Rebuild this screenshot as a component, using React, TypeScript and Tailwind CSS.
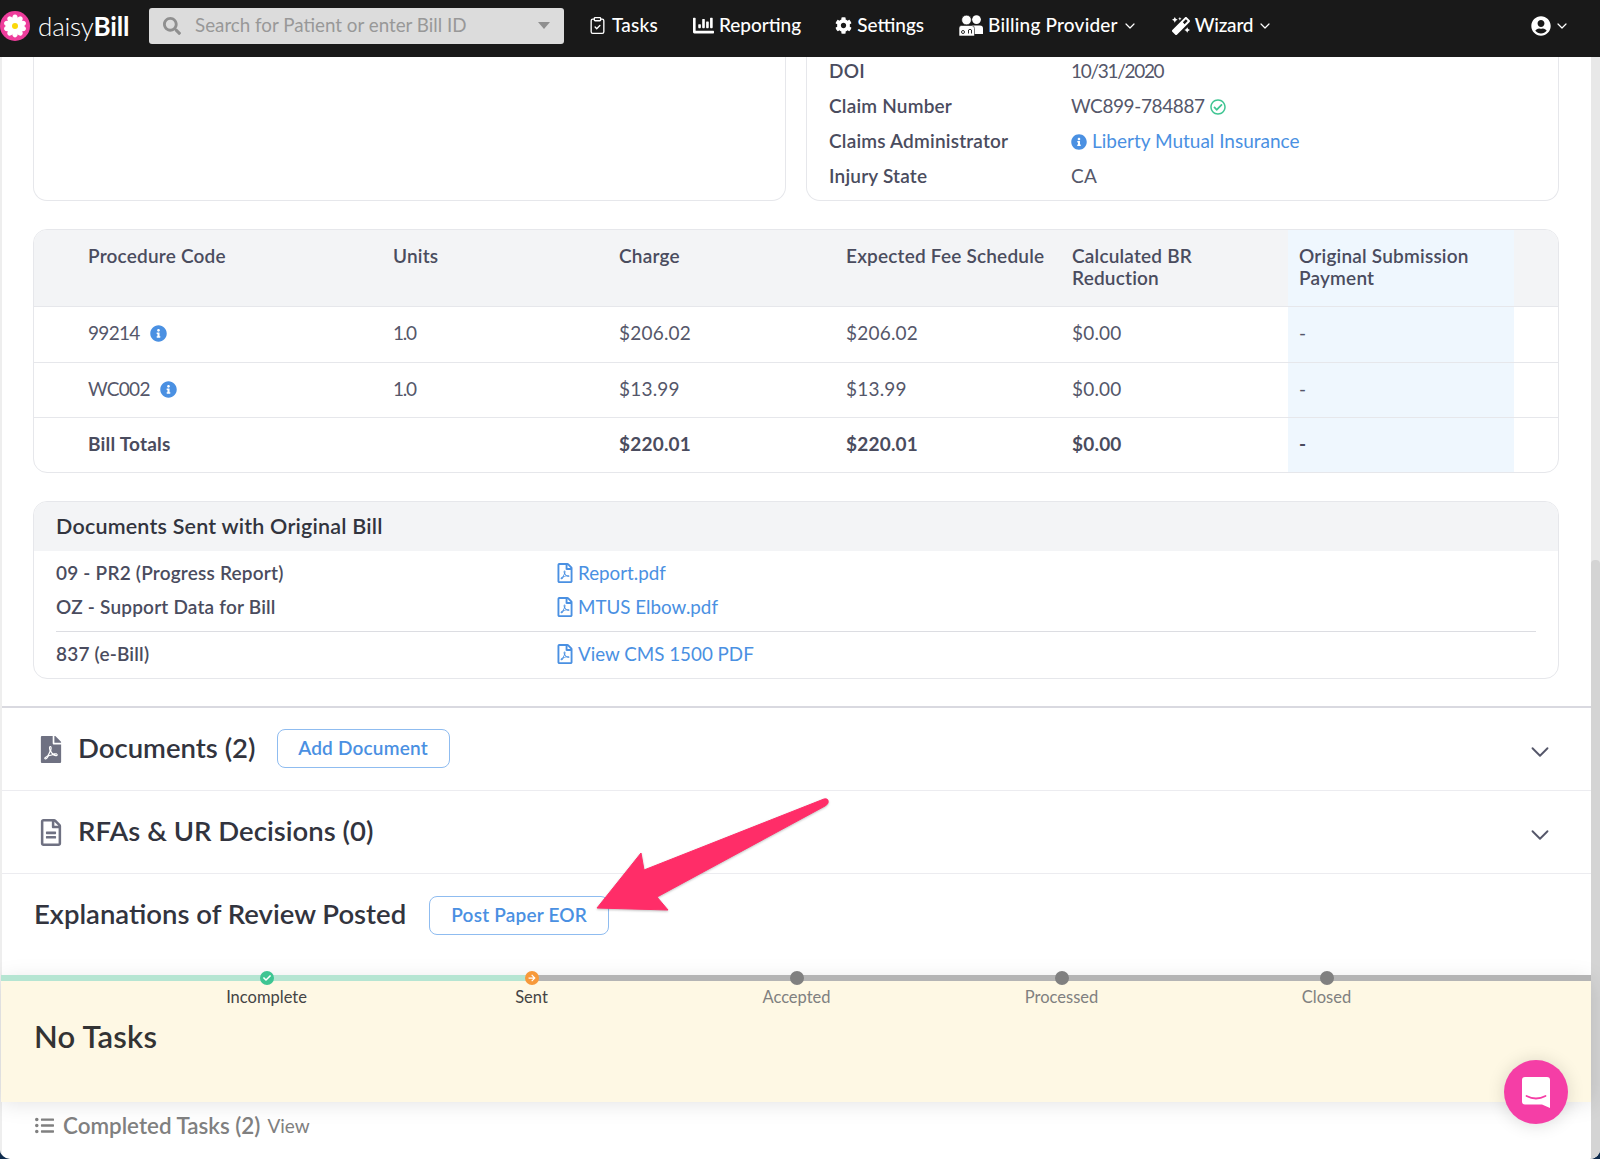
import { ChevronDown, ClipboardCheck } from 'lucide-react';
import {
  FaArrowRight,
  FaChartBar,
  FaCheck,
  FaCog,
  FaFilePdf,
  FaInfoCircle,
  FaListUl,
  FaMagic,
  FaRegCheckCircle,
  FaRegFileAlt,
  FaRegFilePdf,
  FaSearch,
  FaUserCircle,
} from 'react-icons/fa';

const font = { fontFamily: '"Lato", "Noto Sans", sans-serif' };

const tableRows = [
  { code: '99214', height: 'h-[56px]', units: '1.0', charge: '$206.02', fee: '$206.02', br: '$0.00' },
  { code: 'WC002', height: 'h-[55px]', units: '1.0', charge: '$13.99', fee: '$13.99', br: '$0.00' },
];

const steps = [
  { label: 'Incomplete', state: 'done' },
  { label: 'Sent', state: 'current' },
  { label: 'Accepted', state: 'todo' },
  { label: 'Processed', state: 'todo' },
  { label: 'Closed', state: 'todo' },
];

const gridCols = 'grid grid-cols-[348px_226px_227px_226px_227px_226px_1fr]';

function Logo() {
  const petals = [0, 36, 72, 108, 144, 180, 216, 252, 288, 324];
  return (
    <svg width="30" height="30" viewBox="0 0 30 30" className="shrink-0">
      <circle cx="15" cy="15" r="15" fill="#ee3d9c" />
      {petals.map((a) => (
        <ellipse key={a} cx="15" cy="8.4" rx="2.9" ry="4.8" fill="#fff" transform={`rotate(${a} 15 15)`} />
      ))}
      <circle cx="15" cy="15" r="3" fill="#fbd80a" />
    </svg>
  );
}

// two busts, the front one with a stethoscope
function ProviderIcon() {
  return (
    <svg width="24" height="21" viewBox="0 0 24 21" className="shrink-0">
      <circle cx="17.5" cy="4.6" r="4.4" fill="#fff" />
      <path d="M13 10.5 H21 Q24 10.5 24 13.5 V19 H13 Z" fill="#fff" />
      <circle cx="7.5" cy="5" r="4.8" fill="#fff" stroke="#191919" strokeWidth="0.6" />
      <path d="M2.5 10.5 H12.5 Q15.5 10.5 15.5 13.5 V21 H0 V13 Q0 10.5 2.5 10.5 Z" fill="#fff" stroke="#191919" strokeWidth="0.6" />
      <circle cx="4" cy="17" r="1.5" fill="none" stroke="#191919" strokeWidth="0.9" />
      <path d="M9.5 18.5 V15 Q11 13.5 12.5 15 V18.5" fill="none" stroke="#191919" strokeWidth="0.9" />
    </svg>
  );
}

function Header() {
  return (
    <header className="relative z-10 flex h-[57px] shrink-0 items-center bg-[#191919] pb-[6px] text-[19px] font-medium tracking-normal text-white">
      <Logo />
      <div className="ml-[8px] w-[111px] text-[26px] leading-none tracking-[-0.2px]">
        <span className="font-light">daisy</span>
        <span className="font-bold">Bill</span>
      </div>
      <div className="flex h-[36px] w-[415px] items-center rounded-[3px] bg-[#dcdcdc] pl-[14px] pr-[14px] text-[#989898]">
        <FaSearch className="h-[18px] w-[18px] text-[#8f8f8f]" />
        <span className="ml-[14px] flex-1 text-[18.8px] font-normal">Search for Patient or enter Bill ID</span>
        <span className="h-0 w-0 border-x-[6px] border-t-[7px] border-x-transparent border-t-[#8f8f8f]" />
      </div>
      <div className="ml-[24px] flex items-center">
        <ClipboardCheck className="h-[19px] w-[19px]" strokeWidth={1.7} />
        <span className="ml-[5px] tracking-[0.2px]">Tasks</span>
      </div>
      <div className="ml-[35px] flex items-center">
        <FaChartBar className="h-[21px] w-[21px]" />
        <span className="ml-[5px]">Reporting</span>
      </div>
      <div className="ml-[34px] flex items-center">
        <FaCog className="h-[17px] w-[17px]" />
        <span className="ml-[5px]">Settings</span>
      </div>
      <div className="ml-[35px] flex items-center">
        <ProviderIcon />
        <span className="ml-[5px] tracking-[0.2px]">Billing Provider</span>
        <ChevronDown className="ml-[4px] h-[16px] w-[16px]" strokeWidth={1.8} />
      </div>
      <div className="ml-[34px] flex items-center">
        <FaMagic className="h-[18px] w-[18px]" />
        <span className="ml-[5px] tracking-[-0.2px]">Wizard</span>
        <ChevronDown className="ml-[4px] h-[16px] w-[16px]" strokeWidth={1.8} />
      </div>
      <div className="ml-auto mr-[30px] flex items-center">
        <FaUserCircle className="h-[20px] w-[20px]" />
        <ChevronDown className="ml-[3px] h-[16px] w-[16px]" strokeWidth={1.8} />
      </div>
    </header>
  );
}

function ClaimCards() {
  const rows = [
    { label: 'DOI', value: <span className="tracking-[-1.3px]">10/31/2020</span> },
    {
      label: 'Claim Number',
      value: (
        <span className="flex items-center gap-[5px] tracking-[-0.4px]">
          WC899-784887 <FaRegCheckCircle className="h-[16px] w-[16px] text-[#3ec592]" />
        </span>
      ),
    },
    {
      label: 'Claims Administrator',
      value: (
        <span className="flex items-center gap-[5px] tracking-normal text-[#4a90e2]">
          <FaInfoCircle className="h-[16px] w-[16px]" /> Liberty Mutual Insurance
        </span>
      ),
    },
    { label: 'Injury State', value: <span>CA</span> },
  ];
  return (
    <div className="flex h-[144px] gap-[20px]">
      <div className="w-[753px] rounded-b-[14px] border border-t-0 border-[#e6e7eb]" />
      <div className="flex-1 rounded-b-[14px] border border-t-0 border-[#e6e7eb] pl-[22px]">
        <div className="-mt-[3px]">
          {rows.map((r) => (
            <div key={r.label} className="flex h-[35px] items-center text-[#55576a]">
              <span className="w-[242px] font-semibold text-[#4a4c5e]">{r.label}</span>
              {r.value}
            </div>
          ))}
        </div>
      </div>
    </div>
  );
}

function BillTable() {
  return (
    <div className="mt-[28px] overflow-hidden rounded-[14px] border border-[#e6e7eb]">
      <div className={`${gridCols} h-[76px] bg-[#f3f4f6] font-semibold leading-[22px] text-[#4a4c5e]`}>
        <div className="pl-[54px] pt-[15px]">Procedure Code</div>
        <div className="pl-[11px] pt-[15px]">Units</div>
        <div className="pl-[11px] pt-[15px]">Charge</div>
        <div className="pl-[11px] pt-[15px]">Expected Fee Schedule</div>
        <div className="pl-[11px] pt-[15px]">
          Calculated BR
          <br />
          Reduction
        </div>
        <div className="bg-[#eff7fe] pl-[11px] pt-[15px]">
          Original Submission
          <br />
          Payment
        </div>
        <div />
      </div>
      {tableRows.map((row) => (
        <div key={row.code} className={`${gridCols} ${row.height} border-t border-[#e6e7eb] text-[#55576a]`}>
          <div className="flex items-center gap-[10px] pb-[2px] pl-[54px] tracking-[-0.7px]">
            {row.code}
            <FaInfoCircle className="h-[17px] w-[17px] text-[#4a90e2]" />
          </div>
          <div className="flex items-center pb-[2px] pl-[11px] tracking-[-1.2px]">{row.units}</div>
          <div className="flex items-center pb-[2px] pl-[11px]">{row.charge}</div>
          <div className="flex items-center pb-[2px] pl-[11px]">{row.fee}</div>
          <div className="flex items-center pb-[2px] pl-[11px]">{row.br}</div>
          <div className="flex items-center bg-[#eff7fe] pb-[2px] pl-[11px]">-</div>
          <div />
        </div>
      ))}
      <div className={`${gridCols} h-[55px] border-t border-[#e6e7eb] font-bold text-[#4a4c5e]`}>
        <div className="flex items-center pb-[2px] pl-[54px]">Bill Totals</div>
        <div />
        <div className="flex items-center pb-[2px] pl-[11px]">$220.01</div>
        <div className="flex items-center pb-[2px] pl-[11px]">$220.01</div>
        <div className="flex items-center pb-[2px] pl-[11px]">$0.00</div>
        <div className="flex items-center bg-[#eff7fe] pb-[2px] pl-[11px]">-</div>
        <div />
      </div>
    </div>
  );
}

function DocLink({ label, file }: { label: string; file: string }) {
  return (
    <div className="flex h-[34px] items-center">
      <span className="w-[500px] font-semibold text-[#4a4c5e]">{label}</span>
      <FaRegFilePdf className="h-[20px] w-[18px] text-[#4a90e2]" />
      <span className="ml-[4px] text-[18.8px] tracking-normal text-[#4a90e2]">{file}</span>
    </div>
  );
}

function SentDocuments() {
  return (
    <div className="mt-[28px] overflow-hidden rounded-[14px] border border-[#e6e7eb]">
      <div className="flex h-[49px] items-center bg-[#f3f4f6] pl-[22px] text-[21.5px] font-semibold text-[#32343e]">
        Documents Sent with Original Bill
      </div>
      <div className="pl-[22px] pr-[22px] pt-[5px]">
        <DocLink label="09 - PR2 (Progress Report)" file="Report.pdf" />
        <DocLink label="OZ - Support Data for Bill" file="MTUS Elbow.pdf" />
        <div className="mt-[7px] border-t border-[#dcdde2] pb-[7px] pt-[5px]">
          <DocLink label="837 (e-Bill)" file="View CMS 1500 PDF" />
        </div>
      </div>
    </div>
  );
}

function OutlineButton({ children, className }: { children: string; className: string }) {
  return (
    <button className={`flex h-[39px] items-center justify-center rounded-[8px] border border-[#8fbcf0] text-[19px] font-semibold text-[#4a90e2] ${className}`}>
      {children}
    </button>
  );
}

function Collapsible({ icon, title, children }: { icon: React.ReactNode; title: string; children?: React.ReactNode }) {
  return (
    <div className="flex h-[83px] items-center border-b border-[#ececf0] pl-[38px] pr-[36px]">
      {icon}
      <h2 className="-mt-[2px] ml-[16px] text-[27.5px] font-semibold tracking-normal text-[#32343e]">{title}</h2>
      {children}
      <ChevronDown className="ml-auto mt-[6px] h-[30px] w-[30px] text-[#55576a]" strokeWidth={1.5} />
    </div>
  );
}

function Stepper() {
  return (
    <div className="relative z-[1] -ml-[1px] mt-[3px] flow-root bg-[#fef8e4] shadow-[0_0_22px_rgba(0,0,0,0.13)]">
      <div className="relative -mt-[10px] flex pl-[133px]">
        <div className="absolute left-0 right-0 top-[4px] h-[6px] bg-[#b4b4b4]" />
        <div className="absolute left-0 top-[4px] h-[6px] w-[532px] bg-[#b5e5d2]" />
        {steps.map((s) => (
          <div key={s.label} className="relative flex w-[265px] flex-col items-center">
            {s.state === 'done' && (
              <span className="flex h-[14px] w-[14px] items-center justify-center rounded-full bg-[#3ec592] text-white">
                <FaCheck className="h-[8px] w-[8px]" />
              </span>
            )}
            {s.state === 'current' && (
              <span className="flex h-[14px] w-[14px] items-center justify-center rounded-full bg-[#f7993a] text-white">
                <FaArrowRight className="h-[8px] w-[8px]" />
              </span>
            )}
            {s.state === 'todo' && <span className="h-[14px] w-[14px] rounded-full bg-[#808080]" />}
            <span className={`mt-[2px] text-[16.5px] leading-[20px] tracking-normal ${s.state === 'todo' ? 'text-[#808080]' : 'text-[#444]'}`}>
              {s.label}
            </span>
          </div>
        ))}
      </div>
      <div className="flex h-[95px] items-start pl-[33px] pt-[6px] text-[31px] font-semibold text-[#333]">No Tasks</div>
    </div>
  );
}

export default function App() {
  return (
    <div className="h-[1159px] w-[1600px] overflow-hidden bg-[#0f2c4d] text-[19px] tracking-[0.2px]" style={font}>
      <div className="relative flex h-full flex-col overflow-hidden rounded-b-[10px] bg-white">
        <Header />
        <div className="flex min-h-0 flex-1">
          <main className="min-w-0 flex-1 border-l-2 border-[#eeeeee]">
            <div className="pl-[31px] pr-[32px]">
              <ClaimCards />
              <BillTable />
              <SentDocuments />
            </div>
            <div className="mt-[27px] border-t-2 border-[#d9d9e0]">
              <Collapsible icon={<FaFilePdf className="h-[27px] w-[22px] text-[#6f7182]" />} title="Documents (2)">
                <OutlineButton className="-mt-[2px] ml-[21px] w-[173px]">Add Document</OutlineButton>
              </Collapsible>
              <Collapsible icon={<FaRegFileAlt className="h-[27px] w-[22px] text-[#6f7182]" />} title="RFAs & UR Decisions (0)" />
            </div>
            <div className="flex h-[104px] items-start pl-[32px]">
              <h2 className="mt-[19px] text-[27.5px] font-semibold tracking-normal text-[#32343e]">Explanations of Review Posted</h2>
              <OutlineButton className="ml-[23px] mt-[22px] w-[180px]">Post Paper EOR</OutlineButton>
            </div>
            <Stepper />
            <div className="mt-[7px] flex items-center pl-[33px] text-[#808080]">
              <FaListUl className="h-[19px] w-[19px]" />
              <span className="ml-[9px] text-[22.4px] font-semibold tracking-normal">Completed Tasks (2)</span>
              <span className="ml-[7px] tracking-normal">View</span>
            </div>
          </main>
          <div className="w-[9px] shrink-0 bg-[#e8e8e8]">
            <div className="mt-[503px] h-[600px] rounded-t-[4px] bg-[#d4d4d4]" />
          </div>
        </div>

        {/* annotation arrow drawn over the page */}
        <svg className="pointer-events-none absolute left-[590px] top-[790px] z-20 drop-shadow-[0_1px_1px_rgba(0,0,0,0.25)]" width="245" height="125" viewBox="590 790 245 125">
          <path
            d="M597 908 L641 853 L644 870 L824 799 Q829 798 828 803 Q827 805 825 806 L657 897 L668 910 Z"
            fill="#ff2d68"
            stroke="#ff2d68"
            strokeLinejoin="round"
          />
        </svg>

        {/* chat launcher */}
        <div className="absolute left-[1504px] top-[1060px] z-20 flex h-[64px] w-[64px] items-center justify-center rounded-full bg-[#f53ea6] shadow-[0_1px_18px_rgba(0,0,0,0.14)]">
          <svg width="30" height="33" viewBox="0 0 30 33">
            <path d="M4 1 H26 Q29 1 29 4 V32 L21 28.5 H4 Q1 28.5 1 25.5 V4 Q1 1 4 1 Z" fill="#fff" />
            <path d="M5.5 20 Q15 25 24.5 20" fill="none" stroke="#f53ea6" strokeWidth="1.8" strokeLinecap="round" />
          </svg>
        </div>
      </div>
    </div>
  );
}
